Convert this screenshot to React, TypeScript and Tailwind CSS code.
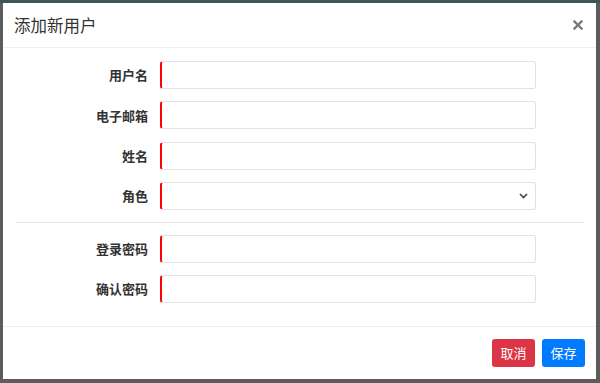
import React from "react";

const font = { fontFamily: '"Noto Sans CJK SC", "Noto Sans", sans-serif' };

function Field({ label, select }: { label: string; select?: boolean }) {
  return (
    <div className="flex items-center h-[28px]">
      <div className="w-[145px] text-right text-[13px] font-bold text-[#333]">{label}</div>
      <div className="ml-[12px] w-[376px] h-[28px] relative rounded-[3px] border border-[#dfe3e7] border-l-2 border-l-[#ff0000] bg-white">
        {select && (
          <svg className="absolute right-[7px] top-[10px]" width="9" height="6" viewBox="0 0 9 6">
            <path d="M1 1 L4.5 4.5 L8 1" fill="none" stroke="#444" strokeWidth="1.6" />
          </svg>
        )}
      </div>
    </div>
  );
}

export default function App() {
  return (
    <div className="w-[600px] h-[383px] bg-[#5c5c5c] relative overflow-hidden" style={font}>
      <div className="h-[3px] bg-[#3f5557]" />
      <div className="absolute left-[3px] top-[3px] w-[593px] h-[376px] bg-white flex flex-col">
        <div className="h-[45px] flex items-center justify-between px-[11px] border-b border-[#eceff1]">
          <div className="text-[16.5px] text-[#333]">添加新用户</div>
          <svg width="10" height="10" viewBox="0 0 10 10" className="mr-[2px]">
            <path d="M1.5 1.5 L8.5 8.5 M8.5 1.5 L1.5 8.5" stroke="#7a7a7a" strokeWidth="2.4" strokeLinecap="square" />
          </svg>
        </div>
        <div className="flex flex-col pt-[13px]">
          <div className="flex flex-col gap-[12.4px]">
            <Field label="用户名" />
            <Field label="电子邮箱" />
            <Field label="姓名" />
            <Field label="角色" select />
          </div>
          <div className="mx-[12px] mt-[12px] mb-[12px] border-t border-[#e8e8e8]" />
          <div className="flex flex-col gap-[12px]">
            <Field label="登录密码" />
            <Field label="确认密码" />
          </div>
        </div>
        <div className="mt-[23px] border-t border-[#eceff1] flex-1 flex items-center justify-end gap-[7px] pr-[11px] pb-[1px]">
          <button className="w-[43px] h-[28px] rounded-[3px] bg-[#dc3545] text-white text-[13px]">取消</button>
          <button className="w-[43px] h-[28px] rounded-[3px] bg-[#007bff] text-white text-[13px]">保存</button>
        </div>
      </div>
    </div>
  );
}
